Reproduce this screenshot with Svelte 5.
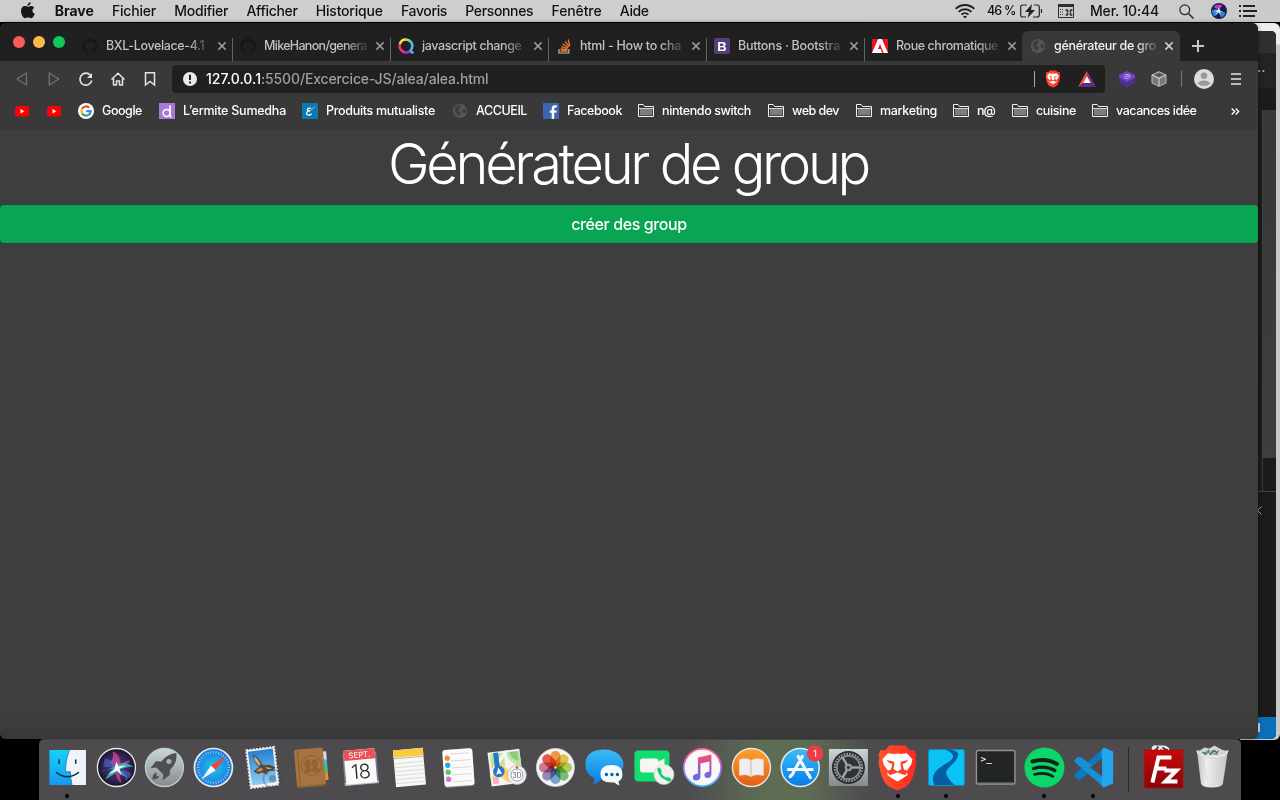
<script>
  const menus = [
    ['Fichier', 44], ['Modifier', 54], ['Afficher', 51], ['Historique', 67],
    ['Favoris', 46], ['Personnes', 68], ['Fenêtre', 50], ['Aide', 29]
  ];
  const tabs = [
    { icon: 'github', title: 'BXL-Lovelace-4.1', w: 98 },
    { icon: 'github', title: 'MikeHanon/genera', w: 103 },
    { icon: 'qwant', title: 'javascript change', w: 99.5 },
    { icon: 'stack', title: 'html - How to cha', w: 101 },
    { icon: 'boot', title: 'Buttons · Bootstra', w: 102 },
    { icon: 'adobe', title: 'Roue chromatique', w: 102 },
    { icon: 'globe', title: 'générateur de gro', w: 102, active: true }
  ];
  const bookmarks = [
    { icon: 'google', label: 'Google', w: 40, slot: 57 },
    { icon: 'ermite', label: 'L’ermite Sumedha', w: 103, slot: 119 },
    { icon: 'produits', label: 'Produits mutualiste', w: 109, slot: 126 },
    { icon: 'globe', label: 'ACCUEIL', w: 51, slot: 67 },
    { icon: 'facebook', label: 'Facebook', w: 55, slot: 71 },
    { icon: 'folder', label: 'nintendo switch', w: 89, slot: 106 },
    { icon: 'folder', label: 'web dev', w: 47, slot: 64 },
    { icon: 'folder', label: 'marketing', w: 57, slot: 73 },
    { icon: 'folder', label: 'n@', w: 18, slot: 35 },
    { icon: 'folder', label: 'cuisine', w: 40, slot: 56 },
    { icon: 'folder', label: 'vacances idée', w: 80.5, slot: 100 }
  ];
  const dock = ['finder', 'siri', 'launchpad', 'safari', 'mail', 'contacts', 'calendar', 'notes', 'reminders', 'maps', 'photos', 'messages', 'facetime', 'itunes', 'books', 'appstore', 'settings', 'brave', 'river', 'terminal', 'spotify', 'vscode', 'sep', 'filezilla', 'trash'];
  const running = ['finder', 'brave', 'river', 'spotify', 'vscode'];
  const petals = ['#f8962c', '#e9c63c', '#b4cf4b', '#6fbf73', '#6aa5d4', '#9582bd', '#cf7194', '#ee4c36'];
  const ticks = Array.from({ length: 36 }, (_, i) => i * 10);

  /* Adjusts the tracking of a label so that it fills its slot. */
  function fit(node, width) {
    const natural = node.getBoundingClientRect().width;
    node.style.letterSpacing = (width - natural) / node.textContent.length + 'px';
  }
</script>

{#snippet small(name)}
  <svg class="ico16" viewBox="0 0 16 16">
    {#if name === 'github'}
      <path fill="#151719" d="M8 .2a7.9 7.9 0 0 0-2.5 15.4c.4 0 .5-.2.5-.4v-1.5c-2.2.5-2.7-.9-2.7-.9-.4-.9-.9-1.200-.9-1.200-.7-.5.1-.5.100-.5.8.100 1.200.8 1.200.8.7 1.200 1.900.9 2.300.7.100-.5.300-.9.500-1.100-1.800-.2-3.600-.9-3.600-3.900 0-.9.300-1.600.8-2.100-.1-.2-.4-1 .1-2.100 0 0 .7-.2 2.200.8a7.500 7.500 0 0 1 4 0c1.500-1 2.200-.8 2.200-.8.4 1.100.2 1.900.1 2.100.5.600.8 1.300.8 2.200 0 3-1.900 3.600-3.600 3.800.3.300.5.800.5 1.500v2.200c0 .2.100.5.500.4A7.900 7.900 0 0 0 8 .2z" />
    {:else if name === 'qwant'}
      <g fill="none" stroke-width="2.500">
        <path stroke="#ffd83d" d="M1.800 6.500A6.300 6.300 0 0 1 8 1.500" /><path stroke="#a9df60" d="M7 1.600a6.300 6.300 0 0 1 4.700 1.300" />
        <path stroke="#43c5ee" d="M11 2.300a6.400 6.400 0 0 1 3.200 6.500c0 2-1.300 3.500-2.300 4.500l3.600 1.500" />
        <path stroke="#b82be4" d="M12 13a6.300 6.300 0 0 1-7.500.2" /><path stroke="#fa356b" d="M5.500 13.700A6.300 6.300 0 0 1 1.700 6.500" />
      </g>
    {:else if name === 'stack'}
      <path d="M3 11v4h9.800v-4" fill="none" stroke="#bcbcbc" stroke-width="1.200" />
      <path d="M4.500 13h7M4.600 11l6.800.7M5.200 8.600l6.500 1.900M6.700 5.800l5.500 3.800M9.200 3.300l4 5.300M12.200 1.500l1.600 6.300" stroke="#f47a29" stroke-width="1.300" />
    {:else if name === 'boot'}
      <rect width="16" height="16" rx="2" fill="#563d7c" />
      <text x="8" y="12.500" text-anchor="middle" font-family="Liberation Sans" font-size="13" font-weight="700" fill="#fff">B</text>
    {:else if name === 'adobe'}
      <path fill="#ec1020" d="M0 1h16v14H0z" /><path fill="#fff" d="M6.100 1h3.800L16 15h-4.300L8 6l-2 5h2.800l1.300 4H0z" />
    {:else if name === 'globe'}
      <circle cx="8" cy="8" r="7" fill="#54585d" />
      <path fill="#3a3c3f" d="M3 5q2-3 5-2.700 2 .7 1 2Q6.500 5 7.500 6.500 6 7 5.500 8q2 0 3.500 1.500 0 2-2 2.300l-1 2Q5 13 5 11 2.500 9.500 3 5zM10.500 6.500q2-1 3-.5 1 3-.5 4.500l-2.500-1.300z" />
    {:else if name === 'google'}
      <circle cx="8" cy="8" r="8" fill="#fff" />
      <g fill="none" stroke-width="2.200"><path stroke="#ea4335" d="M4 5.800A4.600 4.600 0 0 1 11.200 4.700" /><path stroke="#fbbc05" d="M4 10.300a4.600 4.600 0 0 1 0-4.600" /><path stroke="#34a853" d="M11 11.500A4.600 4.600 0 0 1 4 10.200" /><path stroke="#4285f4" d="M8.200 8.200h4.400c0 1.500-.5 2.500-1.700 3.400" /></g>
    {:else if name === 'ermite'}
      <path fill="#a879d6" d="M0 0h16v16H0z" /><circle cx="7.500" cy="10" r="3.400" fill="none" stroke="#fff" stroke-width="1.500" /><path d="M11 2.500V13q0 1 1.500.5" fill="none" stroke="#fff" stroke-width="1.700" />
    {:else if name === 'produits'}
      <path fill="#087bb5" d="M0 0h16v16H0z" /><path d="M9 5.400C7 4.500 5 5.500 5.500 7c.4.900 1.700 1 2.500.8-2.500 0-4 1.800-3.300 3.300.8 1.700 3.900 1 4.800-.5" fill="none" stroke="#fff" stroke-width="1.300" /><path d="m8 8 5-4.500" stroke="#d8c274" />
    {:else if name === 'facebook'}
      <path fill="#3c67ae" d="M0 0h16v16H0z" /><path fill="#fff" d="M8.700 16V9.800H6.800V7.400h1.900V5.600c0-2.200 1.400-3.300 3.300-3.300h1.800v2.200h-1.200c-1 0-1.400.5-1.400 1.300v1.600h2.500l-.4 2.400h-2.100V16z" />
    {:else if name === 'folder'}
      <path fill="#333" stroke="#f2f2f2" d="M.5 13.500V1.500h4.600l1.400 2h9v10z" /><path fill="#7d7d7d" d="M2 6h12.300v6.300H2z" /><path d="M1 5.500h14" stroke="#e4e4e4" stroke-width=".9" />
    {/if}
  </svg>
{/snippet}

{#snippet lion()}
  <path fill="url(#braveG)" d="m-8-22h16l4.500 5 4.500-.5 2 5-1 3 1 4C16.500 10 13 16 8 19.500L0 23l-8-3.500C-13 16-16.500 10-19-5.500l1-4-1-3 2-5 4.500.5z" />
  <path fill="#fff" d="m-9.500-14.200 6 .7L0-14l3.500.5 6-.7 5.500 6-1.200 5.200-4.300 6.200.6 4.300-4.600 3.200L0 14l-5.500-3.300-4.600-3.200.6-4.300L-13.800-3-15-8.200z" />
  <path fill="#f8402a" d="m-11-7.500 7.200 1.400.8 2.200-1 5.500L0 4l4-2.400-1-5.500.8-2.200L11-7.500 8.300-4.700 5-3.600 6.500 2 10.500 3.500 8 7.500 5.500 7 0 5-5.500 7 -8 7.500-10.500 3.500-6.500 2-5-3.600-8.300-4.700z" />
  <path fill="#fff" d="m0 6.300 4.500 2-4.500 3.700-4.500-3.700z" />
{/snippet}

{#snippet app(name)}
  <svg class="appicon" viewBox="-24.400 -28.500 48.800 61">
    {#if name === 'finder'}
      <path fill="url(#findA)" d="M-18-17.500h36.500v35H-18z" /><path fill="#f0f3fc" d="M2-17.500h16.500v35H4.600Q3 11 3 4.200H-2Q-2-8 2-17.500z" />
      <path d="M-8.300-7.500v3.300M8.300-7.500v3.300M-11 5Q0 13.500 11 5" fill="none" stroke="#10283b" stroke-width="1.500" stroke-linecap="round" />
      <path d="M2-17.500Q-2-8-2 4.200h5Q3 11 4.600 17.500" fill="none" stroke="#16668b" stroke-width=".7" />
    {:else if name === 'siri'}
      <circle r="19" fill="url(#siriG)" stroke="#e9e9ee" stroke-width="1.300" />
      <g filter="url(#soft)">
        <path fill="#e0499f" opacity=".7" d="M-4-16Q4-14 4-3q5-4 10-4Q9 0 2 1L5 16Q-1 12-1 2L-6-5Q-2-10-4-16z" />
        <path fill="#35d3cb" opacity=".75" d="M-17 4Q-8 3-1-2q8-5 18 1Q8 0 3 2q5 3 8 8-6-2-10-6-5 4-12 8 3-7 8-11-7 1-14 3z" />
        <path fill="#4b68d8" opacity=".6" d="M-12-9Q-5-9 0-1q-8 1-13 0zM5 2q7 1 10 5l-5 6z" />
      </g>
      <path filter="url(#soft)" fill="#fff" d="M0-6 2-1l8-1-7 3 2 7-4-5-9 4 6-5z" />
    {:else if name === 'launchpad'}
      <circle r="19" fill="url(#silver)" stroke="#c2cccc" stroke-width="1.300" />
      <path fill="#4c5053" d="M12-14.500Q3-14-3-6l-5.500-.3-5.500 7 6-.7 7 7-.7 6 7-5.500.2-5Q13-4 12-14.500zM-8 5q-4 1-4 7 6 0 7-4l-2 1-1-1z" /><circle cx="4.500" cy="-6" r="2.600" fill="#a6afb2" />
    {:else if name === 'safari'}
      <circle r="19" fill="url(#safG)" stroke="#e7eaec" stroke-width="1.700" />
      {#each ticks as a}<path d="M0-16.500v2.300" stroke="#a6d9f7" stroke-width=".8" transform="rotate({a})" />{/each}
      <path fill="#ff3f3d" d="M12.500-11.500 2.300 2.700-2.500-2z" /><path fill="#f7f7f7" d="M-12 12-2.500-2 2.300 2.700z" />
    {:else if name === 'mail'}
      <g transform="rotate(-7)"><path d="M-14-19h28V19h-28z" fill="#f6f8fa" stroke="#eee" stroke-width="2" stroke-dasharray="2 1.300" /><path fill="url(#mailG)" d="M-12.500-17.500h25v34h-25z" />
      <path fill="#5e4630" d="M-8-14Q-2-11 0-3l3 1q6-1 10 4l-3 1 2 2-5-1q-1 2-4 1l2 3-6-3-4 1-4-3Q-7 1-3-1-8-6-8-14z" /><path fill="#c9b393" d="M-7-12q4 3 5.500 9l-1 1Q-7-6-7-12z" /><path fill="#b98f5c" d="m-7 3 5-3 3 2-4 2z" /><path fill="#d8c4a2" d="m3 0 7 2-5 0z" /></g>
      <circle cx="10" cy="11" r="9" fill="none" stroke="#38475a" stroke-width="2" opacity=".3" /><circle cx="10" cy="11" r="3.500" fill="#27394b" opacity=".35" />
    {:else if name === 'contacts'}
      <g transform="rotate(-5)"><path fill="#d8dde1" d="M11-15h5v9h-5z" /><path fill="#38b9e6" d="M11-7h5v7h-5z" /><path fill="#56bf69" d="M11 0h5v7h-5z" /><path fill="#f28d31" d="M11 7h5v7h-5z" /><rect x="-16" y="-19" width="29" height="38" rx="2" fill="#a57440" /><path d="M-12.500-19v38M-16 18h29" stroke="#865927" stroke-width=".8" /><circle cx="0" r="10" cy="-2" fill="none" stroke="#926331" /><g fill="#916232"><ellipse cx="-3.600" cy="-4" rx="3" ry="4" /><ellipse cx="3.600" cy="-4" rx="3" ry="4" /><path d="M-8.500 3.500Q-7 1-5 .5V-2h3V.500L0 2 2 .500V-2h3V.500Q7 1 8.500 3.500 5 7.500 0 3.500-5 7.500-8.500 3.500z" /></g></g>
    {:else if name === 'calendar'}
      <g transform="rotate(-5)"><path fill="#71828a" d="M-17-14h34v31h-34z" /><path fill="#a9b9be" d="M-17 14h34v3h-34z" /><rect x="-15.500" y="-18" width="31" height="34" rx="1" fill="#fafafa" /><path fill="#ec5054" d="M-15.500-18h31v10h-31z" /><text y="-10" text-anchor="middle" font-family="Inter" font-size="7.800" fill="#fff">SEPT.</text><text y="11" text-anchor="middle" font-family="Inter" font-size="20" font-weight="300" fill="#222" letter-spacing="-.5">18</text></g>
    {:else if name === 'notes'}
      <g transform="rotate(-5)"><path fill="#f8f8f6" d="M-15-18.500h30v37h-30z" /><path fill="#f7cb42" d="M-15-18.500h30v7.500h-30z" /><path d="M-15-10h30" stroke="#8a7547" stroke-dasharray="1" /><path d="M-15-5h30M-15-1h30M-15 3h30M-15 7h30M-15 11h30M-15 15h30" stroke="#ccc" stroke-width=".6" /></g>
    {:else if name === 'reminders'}
      <g transform="rotate(-4)"><rect x="-15" y="-18.500" width="30" height="38" rx="3" fill="#8a8b8d" /><rect x="-15" y="-18.500" width="30" height="37" rx="3" fill="#fbfbfb" /><path d="M-7-14h18M-7-7h20M-7 0h20M-7 7h20M-7 14h20" stroke="#ccc" stroke-width=".7" /><circle cx="-10.500" cy="-10" r="2.700" fill="#f68b33" /><circle cx="-10.500" cy="-3" r="2.700" fill="#22a8ed" /><circle cx="-10.500" cy="4" r="2.700" fill="#54cc5e" /><circle cx="-10.500" cy="11" r="2.700" fill="#c877df" /></g>
    {:else if name === 'maps'}
      <g transform="rotate(-7)"><path fill="#f5f3ec" d="M-17-17h32v34h-32z" /><path fill="#bee3a6" d="M-15-15h14v13h-14zM2-15h13v16Q2-4 2-15z" /><path fill="#f5b2c0" d="M-15 3h6v12h-6z" /><path fill="#ffd16a" d="m-15-4 9-3L8 12l-8 3-7-7-8 1z" /><path fill="#8ecd77" d="M5-15h8v10Q5-8 5-15z" /><path fill="#f8f7ef" d="M-17 3 0-17h4L-17 9z" /><path d="M-9-16V3" stroke="#2378c9" stroke-width="5" /><circle cx="-8" cy="3" r="5.800" fill="#2378ce" /><path fill="#fff" d="m-8-1 3 7-3-1-3 1z" /></g>
      <circle cx="10.500" cy="7.500" r="9.500" fill="#f0f1ef" stroke="#aeb2b5" stroke-width=".7" /><circle cx="10.500" cy="7.500" r="6" fill="#fff" stroke="#7e8b97" stroke-width=".8" /><circle cx="10.500" cy="0" r="1.300" fill="#e44" /><text x="10.500" y="10" text-anchor="middle" font-family="Inter" font-size="7" fill="#536574">3D</text>
    {:else if name === 'photos'}
      <circle r="19" fill="#f4f4f4" stroke="#ddd" stroke-width=".7" />
      <g class="petals">{#each petals as c, i}<rect x="-5" y="-16.500" width="10" height="16" rx="4.800" fill={c} transform="rotate({i * 45})" />{/each}</g><circle r="1.300" fill="#ddd9ad" />
    {:else if name === 'messages'}
      <path fill="url(#blueG)" d="M0-18C11-18 19-11 19-3S11 12 1 12l-6 1q-2 3-7 4 3-3 2-6-9-4-9-14 0-15 19-15z" /><path fill="#f2fafd" d="M7-2.500q11 0 11 9.500 0 5-4 7l1 4q-3-1-5-3-14 1-14-8Q-4-2.500 7-2.500z" /><path fill="#165e91" d="M2 5.300a1.700 1.700 0 1 1 0 3.400 1.700 1.700 0 0 1 0-3.400m5.500 0a1.700 1.700 0 1 1 0 3.400 1.700 1.700 0 0 1 0-3.400m5.500 0a1.700 1.700 0 1 1 0 3.400 1.700 1.700 0 0 1 0-3.400" />
    {:else if name === 'facetime'}
      <rect x="-19" y="-17" width="35" height="31" rx="4" fill="#10df70" /><path fill="#f6f6f3" d="M-13.500-6q0-3 3-3H2q3 0 3 3l6-3V5L5 2q0 3-3 3h-12.500q-3 0-3-3z" /><circle cx="10.500" cy="7" r="10" fill="#f1f3f0" stroke="#c4d6c9" stroke-width=".6" /><path d="M6 2q0 8 9 10" fill="none" stroke="#14cf67" stroke-width="2.400" /><path d="m5.500 2 1 2m7.500 7.500 2 .7" stroke="#14cf67" stroke-width="3.600" stroke-linecap="round" />
    {:else if name === 'itunes'}
      <circle r="18.700" fill="#f8f8f8" stroke="url(#tuneG)" stroke-width="1.700" /><path fill="url(#noteG)" d="M-4.500-10 9-13V6.500q0 4-4 4-3 0-3-3 0-3 5-3.500V-6L-2-4v13q0 4-4.500 4-3.500 0-3-3.500 0-3 5-3.500z" />
    {:else if name === 'books'}
      <circle r="19" fill="url(#orangeG)" stroke="#ece5df" stroke-width="1.400" /><path fill="#eee" stroke="#dbdbdb" stroke-width=".7" d="M-12-8q8-2 11.500 1Q4-10 12-8V8Q4 6-.5 9-5 6-12 8z" /><path d="M-.5-7V8" stroke="#c8b5a4" />
    {:else if name === 'appstore'}
      <g transform="translate(.8)"><circle r="19" fill="url(#blueG)" stroke="#e3edf4" stroke-width="1.500" /><path d="M2-11-8 7M-2-11 8 7M-12 2H3M8 2h4M-9 8l-1 1M9 8l1 2" stroke="#f4f9ff" stroke-width="3.200" stroke-linecap="round" /><circle cx="14.800" cy="-14" r="8.200" fill="#ec3d46" /><text x="14.800" y="-10.800" text-anchor="middle" font-family="Inter" font-size="9" fill="#fff">1</text></g>
    {:else if name === 'settings'}
      <path fill="url(#silver)" d="M-19.500-18.500h39v37h-39z" /><circle r="16.500" fill="#2b2d2f" /><circle r="13.600" fill="none" stroke="#989c9e" stroke-width="2.200" stroke-dasharray="1.600 1.200" /><circle r="11.600" fill="#303234" stroke="#8d9092" stroke-width="1.600" />{#each [90, 210, 330] as a}<path d="M0-2v-9.500" stroke="#a2a5a6" stroke-width="2.400" transform="rotate({a})" />{/each}<circle r="3.700" fill="#999d9f" /><circle r="1.700" fill="#3c3e40" />
    {:else if name === 'brave'}
      {@render lion()}
    {:else if name === 'river'}
      <rect x="-18" y="-18" width="36" height="36" rx="2" fill="#0ac2f4" stroke="#1588be" /><path fill="#045da0" d="M-1-18Q15-18 11-10C8-3-2 1 0 7q2 5 8 10.500h-20C-18 5-5-1 3-6Q12-12-1-18z" />
    {:else if name === 'terminal'}
      <rect x="-19" y="-17" width="38.500" height="33.500" rx="1.500" fill="#222425" stroke="#909598" stroke-width="1.400" /><path d="M-17.500 15h35.500" stroke="#525658" /><text x="-15" y="-5.500" font-family="DejaVu Sans Mono" font-size="9.500" font-weight="700" fill="#eee">&gt;_</text>
    {:else if name === 'spotify'}
      <circle r="20" fill="#0bd66a" /><g fill="none" stroke="#142119" stroke-linecap="round"><path d="M-12-6Q2-10 12.500-3.500" stroke-width="4" /><path d="M-11 1Q1-2.500 10.500 3" stroke-width="3.200" /><path d="M-10 7Q1 4 8.500 9" stroke-width="2.600" /></g>
    {:else if name === 'vscode'}
      <g transform="translate(.7)"><path fill="#087bc2" d="M10-20-19.500 7v2l3 3 3 0L14-10V-18z" /><path fill="#1491d8" d="m-16.500-10.500-3 3v2L10 20l7-8L-13.500-10.500z" /><path fill="#23a6ef" d="M9.500-20 19-16v32L9.500 20l-2-2V-17z" /><path fill="#4e4b4f" d="M8-9.500V9L-4 0z" /></g>
    {:else if name === 'filezilla'}
      <path d="M-12-17q0-6 5-5l8 0q5 1 6 6z" fill="#e8e8e8" /><path d="m-8-17 3-4m4 1 5 3" stroke="#444" stroke-width="2" /><path fill="url(#redG)" stroke="#af0b0e" stroke-width="1.600" stroke-dasharray="1.800 1.300" d="M-19-17.500h38.500v38H-19z" /><path fill="none" stroke="#fff" stroke-width="4" d="M-11 15-5-10H8M-8 1H3M1 3h12L2 14h12" />
    {:else if name === 'trash'}
      <path fill="url(#trashG)" d="m-15.500-17 4 33q1 4 11 4t11-4l5-33z" /><path fill="#d3d5d4" d="m-14-16 6-4 5 1 5-3 7 4 5 2-2 5-13 2-11-2z" /><path d="m-10-15 4 1 2-3 2 4 4-4 3 3m-14 2 3-1m6-4-1 3m7-3-2 3" stroke="#59646d" stroke-width="1.300" fill="none" /><path d="m-7-15 4-1m4 2 4 1" stroke="#42a7a0" stroke-width="1.300" /><path d="M-15.500-17q1 6 15.500 6t15.500-6" fill="none" stroke="#f1f1f1" stroke-width="1.300" /><path d="m-9-6 4 20M7-6 3 14m-6-11 6-8" stroke="#ccc" stroke-width=".6" />
    {/if}
  </svg>
{/snippet}

<svg class="defs">
  <defs>
    <filter id="soft" x="-20%" y="-20%" width="140%" height="140%"><feGaussianBlur stdDeviation=".7" /></filter>
    <linearGradient id="findA" x2="0" y2="1"><stop stop-color="#14d0fb" /><stop offset="1" stop-color="#159af2" /></linearGradient>
    <radialGradient id="siriG"><stop stop-color="#60407b" /><stop offset=".65" stop-color="#342457" /><stop offset="1" stop-color="#171527" /></radialGradient>
    <linearGradient id="silver" x2="0" y2="1"><stop stop-color="#c9d6da" /><stop offset="1" stop-color="#858b8d" /></linearGradient>
    <radialGradient id="safG"><stop stop-color="#18c9ef" /><stop offset="1" stop-color="#2377db" /></radialGradient>
    <linearGradient id="mailG" x2="0" y2="1"><stop stop-color="#247fd4" /><stop offset="1" stop-color="#91ceef" /></linearGradient>
    <linearGradient id="blueG" x2="0" y2="1"><stop stop-color="#38bdf7" /><stop offset="1" stop-color="#087ce7" /></linearGradient>
    <linearGradient id="tuneG" x2="0" y2="1"><stop stop-color="#ff6284" /><stop offset=".5" stop-color="#c15cf2" /><stop offset="1" stop-color="#39c2fa" /></linearGradient>
    <linearGradient id="noteG" x2="0" y2="1"><stop stop-color="#fa5069" /><stop offset=".6" stop-color="#a354c9" /><stop offset="1" stop-color="#477ced" /></linearGradient>
    <linearGradient id="orangeG" x2="0" y2="1"><stop stop-color="#ffa12c" /><stop offset="1" stop-color="#e35c17" /></linearGradient>
    <linearGradient id="braveG"><stop stop-color="#ff5428" /><stop offset="1" stop-color="#ff2821" /></linearGradient>
    <linearGradient id="redG" x2="0" y2="1"><stop stop-color="#c9080b" /><stop offset="1" stop-color="#870609" /></linearGradient>
    <linearGradient id="trashG"><stop stop-color="#bdbdbd" /><stop offset=".3" stop-color="#eee" /><stop offset="1" stop-color="#c4c4c4" /></linearGradient>
  </defs>
</svg>

<div class="desktop">
  <header class="menubar">
    <svg class="apple" viewBox="0 0 14 17"><path fill="#171717" d="M9.700.2c.1 2-1.500 3.700-3.300 3.600C6.200 2 8 .3 9.700.2zM7 4.800c.8 0 1.700-.8 3.100-.8 1.200 0 2.400.7 3.100 1.700-2.600 1.500-2.200 5 .6 6.100-.7 2-2.100 4.400-3.600 4.400-1.200 0-1.500-.7-3-.7s-1.900.7-3 .7C2 16.300 0 12 0 9c0-3 1.900-4.900 3.900-4.900 1.400 0 2.300.7 3.100.7z" /></svg>
    <span class="menu bold" style="width:39px"><span use:fit={39}>Brave</span></span>
    {#each menus as [label, w]}<span class="menu" style="width:{w}px"><span use:fit={w}>{label}</span></span>{/each}
    <div class="status">
      <svg class="wifi" viewBox="0 0 20 15"><g fill="none" stroke="#202020" stroke-width="1.900"><path d="M.7 4.800a13.200 13.200 0 0 1 18.600 0M3.600 7.900a9 9 0 0 1 12.800 0M6.500 10.600a5 5 0 0 1 7 0" /></g><path fill="#202020" d="m10 14.500-2-2q2-1.500 4 0z" /></svg>
      <span class="percent"><span use:fit={28.500}>46 %</span></span>
      <svg class="battery" viewBox="0 0 23 14"><path d="M7 1H3Q.7 1 .7 3v8q0 2 2.300 2h3M14 1h3q2.300 0 2.300 2v8q0 2-2.300 2h-4M21.500 5v4" fill="none" stroke="#252525" stroke-width="1.200" /><path fill="#202020" d="M12 0 5 8h4l-1.500 6L15 6h-4z" /></svg>
      <svg class="keyboard" viewBox="0 0 16 14"><path fill="none" stroke="#303030" d="M.5.5h15v13H.5z" /><path fill="#303030" d="M0 0h16v3H0z" /><path d="M2 5.500h4M2 8h4M2 10.500h4" stroke="#333" stroke-width="1.100" stroke-dasharray="1" /><path d="M9.500 7h3v3h-3zM9.500 7H8V5.500h1.500zM12.500 7V5.500H14V7zM9.500 10v1.500H8V10zM12.500 10H14v1.500h-1.500z" fill="none" stroke="#333" stroke-width=".9" /></svg>
      <span class="clock"><span use:fit={69}>Mer. 10:44</span></span>
      <svg class="loupe" viewBox="0 0 15 15"><circle cx="5.800" cy="5.800" r="4.900" fill="none" stroke="#292929" stroke-width="1.200" /><path d="m9.500 9.500 5 5" stroke="#292929" stroke-width="1.500" /></svg>
      <svg class="siri" viewBox="0 0 16 16"><circle cx="8" cy="8" r="8" fill="#171c4d" /><path fill="#c03bb4" d="M2.500 4q4-4 9-1.500L8 7z" /><path fill="#2f85dd" d="M1 7.500q5-2.500 7 .5l6.500 1.500q-1 4-4.500 5L8 9.500l-4 4q-3-2-3-6z" /><path fill="#dff" d="m8 4.500.8 2.700 4 2.300L9 8.500l.7 4L8 9l-3.500 2.700 2-3.200-3.500-.2L7 7z" /></svg>
      <svg class="list" viewBox="0 0 18 12"><path d="M0 1h2M0 6h2M0 11h2M4 1h12M4 6h14M4 11h12" stroke="#222" stroke-width="2" /></svg>
    </div>
  </header>

  <div class="whitewin"></div>
  <section class="editor">
    <div class="edtitle"></div>
    <div class="edtabs">··</div>
    <div class="edcrumb"></div>
    <div class="edcode"></div>
    <div class="edlow"></div>
    <div class="edpanel"><svg viewBox="0 0 5 9"><path d="M4.500.5.5 4.500l4 4" fill="none" stroke="#aaa" /></svg></div>
    <div class="edstatus"><i></i></div>
  </section>

  <section class="browser">
    <div class="strip">
      <div class="lights"><i class="r"></i><i class="y"></i><i class="g"></i></div>
      {#each tabs as t, i}
        <div class="tab" class:active={t.active} class:line={i > 0 && i < 6}>
          {@render small(t.icon)}
          <span class="title"><span use:fit={t.w}>{t.title}</span></span>
          <svg class="close" viewBox="0 0 8 8"><path d="m.4.400 7.200 7.200m0-7.200L.4 7.600" stroke="currentColor" stroke-width="1.500" /></svg>
        </div>
      {/each}
      <svg class="plus" viewBox="0 0 12 12"><path d="M6 0v12M0 6h12" stroke="#c8c8c8" stroke-width="2" /></svg>
    </div>
    <div class="toolbar">
      <div class="nav">
        <svg viewBox="0 0 16 16"><path d="M12.500 2 3 8l9.500 6z" fill="none" stroke="#727272" stroke-width="1.300" stroke-linejoin="round" /></svg>
        <svg viewBox="0 0 16 16"><path d="M3.300 2 12.800 8l-9.500 6z" fill="none" stroke="#727272" stroke-width="1.300" stroke-linejoin="round" /></svg>
        <svg viewBox="0 0 16 16"><path d="M12.300 4A6 6 0 1 0 13.800 9.500" fill="none" stroke="#e4e4e4" stroke-width="1.600" /><path d="M14 2v5H9z" fill="#e4e4e4" /></svg>
        <svg viewBox="0 0 16 16"><path d="M1.500 8.500 8 2.200l6.500 6.300M3.500 7.500V14h3v-4h3v4h3V7.500" fill="none" stroke="#e4e4e4" stroke-width="1.500" stroke-linejoin="round" /></svg>
        <svg viewBox="0 0 16 16"><path d="M3.500 1.800h9V14L8 10.500 3.500 14z" fill="none" stroke="#e4e4e4" stroke-width="1.500" /></svg>
      </div>
      <div class="url">
        <svg class="info" viewBox="0 0 14 14"><circle cx="7" cy="7" r="7" fill="#e8eaed" /><path d="M7 2.800v5.200M7 9.400v2" stroke="#222" stroke-width="2" /></svg>
        <span class="address"><span class="host" use:fit={55}>127.0.0.1</span><span use:fit={227.500}>:5500/Excercice-JS/alea/alea.html</span></span>
        <i class="bar"></i>
        <svg class="minibrave" viewBox="-20 -23 40 47">{@render lion()}</svg>
        <svg class="bat" viewBox="0 0 18 16"><path fill="#fa5035" d="M9 0 0 16l5.500-4L9 5z" /><path fill="#8c2c76" d="m9 0 9 16-5.500-4L9 5z" /><path fill="#5c2d91" d="m0 16 5.500-4h7L18 16z" /><path fill="#fff" d="m9 5-3.700 7h7.400z" /></svg>
      </div>
      <svg class="purple" viewBox="0 0 16 16"><path fill="#7446c6" d="M8 0 16 4v7l-8 5-8-5V4z" /><path fill="#4d2d96" d="m0 6.500 8 4.500 8-4.500V11l-8 5-8-5z" /><path d="M5.500 6.500Q5 4.500 7 3.700t3.500.5-1 2.600-3.500.2M7 5.500l2.500-.7" fill="none" stroke="#d5bdfa" stroke-width=".9" /></svg>
      <svg class="cube" viewBox="0 0 16 16"><path fill="#777" stroke="#bcbcbc" stroke-linejoin="round" d="M8 .7 15 4v8l-7 3.300L1 12V4z" /><path d="m1 4 7 3.300L15 4M8 7.300v8" fill="none" stroke="#c8c8c8" stroke-width="1.200" /><path d="m3.500 4 4.500 2 4.500-2L8 2z" fill="#555" /></svg>
      <i class="bar dim"></i>
      <svg class="avatar" viewBox="0 0 20 20"><circle cx="10" cy="10" r="10" fill="#ddd" /><circle cx="10" cy="6.800" r="3.300" fill="#999" /><path fill="#999" d="M3.700 14.500q1.500-3 6.300-3t6.300 3Q14 17 10 17t-6.300-2.500z" /></svg>
      <svg class="burger" viewBox="0 0 10 12"><path d="M0 1h10M0 6h10M0 11h10" stroke="#bbb" stroke-width="2" /></svg>
    </div>
    <nav class="bookmarks">
      {#each [1, 2] as n}<svg class="youtube" viewBox="0 0 14 11"><rect width="14" height="10.500" rx="2.500" fill="#f00" /><path fill="#fff" d="m5.500 3 4 2.300-4 2.300z" /></svg>{/each}
      {#each bookmarks as b}<a href="#{b.label}">{@render small(b.icon)}<span class="bm" style="width:{b.slot}px"><span use:fit={b.w}>{b.label}</span></span></a>{/each}
      <svg class="more" viewBox="0 0 9 7"><path d="m.7.500 3 3-3 3m4-6 3 3-3 3" fill="none" stroke="#fff" stroke-width="1.400" /></svg>
    </nav>
    <main>
      <h1><span use:fit={480}>Générateur de group</span></h1>
      <button><span use:fit={115.500}>créer des group</span></button>
    </main>
  </section>

  <footer class="dock">
    {#each dock as d}
      {#if d === 'sep'}<div class="sep"></div>{:else}<div class="cell">{@render app(d)}{#if running.includes(d)}<i class="dot"></i>{/if}</div>{/if}
    {/each}
  </footer>
</div>

<style>
  :global(body) { background: #000; overflow: hidden; }
  svg { display: block; flex: none; overflow: visible; }
  .defs { position: absolute; width: 0; height: 0; }
  .desktop { position: relative; width: 1280px; height: 800px; background: #000; overflow: hidden; font-family: Inter, sans-serif; }
  .desktop span { white-space: nowrap; }
  .menubar { height: 22px; background: linear-gradient(90deg, #cecece, #cfcfcf 60%, #cbcbcb); display: flex; align-items: center; gap: 18.250px; padding-left: 20.500px; font-size: 14px; font-weight: 450; line-height: 22px; color: #111; box-sizing: border-box; }
  .apple { width: 14px; height: 17px; margin: -2px 2px 0 0; }
  .menu { flex: none; }
  .bold { font-weight: 700; }
  .status { margin-left: auto; display: flex; align-items: center; }
  .wifi { width: 20px; height: 15px; margin-right: 12px; }
  .percent { width: 33px; font-size: 12.500px; }
  .battery { width: 23px; height: 14px; margin-right: 15px; }
  .keyboard { width: 16px; height: 14px; margin-right: 16px; }
  .clock { width: 89px; }
  .loupe { width: 15px; height: 15px; margin-right: 17px; }
  .siri { width: 16px; height: 16px; margin-right: 12px; }
  .list { width: 18px; height: 12px; margin-right: 23px; }
  .whitewin { position: absolute; left: 1240px; top: 23px; width: 40px; height: 717px; border-radius: 0 6px 6px 0; background: linear-gradient(#eee 0, #eee 21px, #c8c8c8 22px, #c8c8c8); }
  .editor { position: absolute; left: 1240px; top: 31px; width: 36px; height: 708px; border-radius: 0 5px 5px 0; overflow: hidden; background: #1b1b1b; display: flex; flex-direction: column; }
  .edtitle { height: 22px; background: #303030; }
  .edtabs { height: 35px; background: #232323; color: #aaa; padding-left: 17px; font-size: 15px; line-height: 35px; box-sizing: border-box; }
  .edcrumb { height: 22px; background: #1b1b1b; }
  .edcode { height: 348px; margin-left: 22px; background: linear-gradient(#373737, #3e3e3e); border-left: 1px solid #444; }
  .edlow { height: 33px; margin-left: 22px; border-left: 1px solid #3b3b3b; box-sizing: border-box; }
  .edpanel { height: 226px; padding: 14px 0 0 17px; border-top: 1px solid #444; box-sizing: border-box; }
  .edpanel svg { width: 5px; height: 9px; }
  .edstatus { height: 22px; background: #0870b8; padding: 6px 0 0 18px; box-sizing: border-box; }
  .edstatus i { display: block; width: 2px; height: 9px; background: #ddd; }
  .browser { position: absolute; left: 0; top: 23px; width: 1258px; height: 716px; border-radius: 6px; overflow: hidden; background: #3d3f3e; display: flex; flex-direction: column; box-shadow: 0 0 5px #0006; }
  .strip { height: 38px; background: #202020; display: flex; align-items: flex-end; flex: none; }
  .lights { width: 74px; height: 38px; box-sizing: border-box; padding-left: 13px; display: flex; align-items: center; gap: 8px; }
  .lights i { width: 12px; height: 12px; border-radius: 50%; }
  .r { background: #ff5b56; } .y { background: #fdba4b; } .g { background: #0fca58; }
  .tab { width: 158px; height: 30px; padding: 0 7px 0 8px; box-sizing: border-box; display: flex; align-items: center; color: #bdc1c6; }
  .tab.line { background: linear-gradient(#646464, #646464) 0 7px / 1px 23px no-repeat; }
  .active { background: #393939; border-radius: 6px 6px 0 0; color: #f3f3f3; }
  .ico16 { width: 16px; height: 16px; }
  .title { flex: none; width: 104px; height: 20px; margin-left: 8px; font-size: 12.500px; line-height: 20px; font-weight: 500; -webkit-mask-image: linear-gradient(90deg, #000 78%, transparent 103%); }
  .close { width: 8px; height: 8px; margin-left: 7px; color: #999; }
  .tab:not(.active) .close { margin-left: 7.500px; }
  .active .close { color: #d2d2d2; }
  .plus { width: 12px; height: 12px; margin: 0 0 9px 12px; }
  .toolbar { height: 36px; background: #393939; display: flex; align-items: center; flex: none; }
  .nav { width: 172px; padding-left: 14px; box-sizing: border-box; display: flex; gap: 16px; }
  .nav svg { width: 16px; height: 16px; }
  .url { width: 933px; height: 28px; border-radius: 4px; background: #202020; display: flex; align-items: center; flex: none; }
  .info { width: 14px; height: 14px; margin: 0 9px 0 11px; }
  .address { width: 828px; display: flex; color: #9aa0a6; font-size: 14px; line-height: 24px; font-weight: 450; }
  .host { color: #fff; font-weight: 500; }
  .bar { width: 1px; height: 16px; background: #aaa; flex: none; }
  .minibrave { width: 16px; height: 18px; margin-left: 10px; }
  .bat { width: 18px; height: 16px; margin-left: 17px; }
  .purple { width: 16px; height: 16px; margin-left: 14px; }
  .cube { width: 16px; height: 16px; margin-left: 16px; }
  .dim { margin-left: 14px; background: #777; }
  .avatar { width: 20px; height: 20px; margin-left: 12px; }
  .burger { width: 10px; height: 12px; margin-left: 17px; }
  .bookmarks { height: 33px; padding: 0 0 5px 15px; box-sizing: border-box; background: #393939; display: flex; align-items: center; flex: none; }
  .youtube { width: 14px; height: 11px; margin-right: 18px; }
  .youtube + .youtube { margin-right: 17px; }
  a { display: flex; align-items: center; gap: 8px; color: #fff; text-decoration: none; font-size: 12.500px; line-height: 20px; font-weight: 500; flex: none; }
  .bm { display: block; flex: none; margin-top: -1px; }
  .more { width: 9px; height: 7px; margin-left: 14.500px; }
  main { flex: 1; background: linear-gradient(#3d3f3e 96%, #373838); }
  h1 { height: 75px; margin: 0; padding-right: 2px; font-size: 56px; line-height: 69px; font-weight: 340; color: #fff; text-align: center; }
  button { display: block; width: 1258px; height: 38px; padding: 0; border: 0; border-radius: 4px; background: #09a552; color: #fff; font: 500 16px/38px Inter, sans-serif; }
  .dock { position: absolute; left: 39px; top: 739px; width: 1202px; height: 61px; box-sizing: border-box; padding-left: 3.800px; border-radius: 5px 5px 0 0; display: flex; border-top: 1px solid #444244; background: linear-gradient(90deg, #4e4b4f 0 54%, #5e6c54 60%, #5e6c54 64%, #4e4b4f 69%); }
  .cell { position: relative; width: 48.850px; height: 61px; margin-top: -1px; flex: none; }
  .appicon { width: 48.850px; height: 61px; }
  .petals rect { mix-blend-mode: multiply; opacity: .9; }
  .dot { position: absolute; left: 22.400px; top: 55px; width: 4px; height: 4px; border-radius: 50%; background: #000; }
  .sep { width: 1px; height: 45px; margin: 7px 10px 0 10.500px; background: #29282a; }
</style>
